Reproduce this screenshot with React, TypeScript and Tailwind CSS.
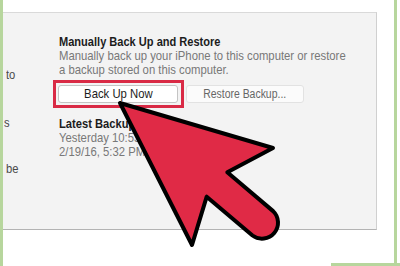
import React from 'react';

// Green frame colour used by the page edges
const GREEN = 'bg-[#b7d69d]';

const Arrow = () => (
  <svg
    className="absolute inset-0 pointer-events-none"
    width={400}
    height={266}
    viewBox="0 0 400 266"
  >
    <path
      d="M120,103 L273,148 L227.3,172.3 L273.1,211.1 A16,16 0 0 1 252.5,235.5 L206.7,196.7 L192,245 Z"
      fill="#e02a46"
      stroke="#000"
      strokeWidth={4}
      strokeLinejoin="round"
    />
  </svg>
);

const App: React.FC = () => {
  return (
    <div className="relative w-[400px] h-[266px] bg-white flex overflow-hidden font-['Liberation_Sans',Arial,sans-serif]">
      {/* left edge */}
      <div className={`w-[3px] shrink-0 ${GREEN}`} />

      {/* middle */}
      <div className="flex-1 min-w-0 flex flex-col">
        <div className="h-[12px]" />
        <div className="w-[374px] h-[218px] bg-[#f3f3f3] border-t border-r border-b border-t-[#d9d9d9] border-r-[#d0d0d0] border-b-[#b3b3b3] flex">
          {/* cut-off left column */}
          <div className="w-[56px] shrink-0 overflow-hidden text-[13px] leading-[15px] text-[#4a4a4a]">
            <div className="mt-[54px] pl-[3px]">
              <span className="inline-block origin-left scale-x-[0.86]">to</span>
            </div>
            <div className="mt-[33px] pl-[1px]">
              <span className="inline-block origin-left scale-x-[0.86]">s</span>
            </div>
            <div className="mt-[31px] pl-[3px]">
              <span className="inline-block origin-left scale-x-[0.86]">be</span>
            </div>
          </div>

          {/* main content */}
          <div className="flex-1 min-w-0 pt-[21px]">
            <div className="text-[13px] leading-[15px] font-bold text-[#1c1c1c] whitespace-nowrap">
              <span className="inline-block origin-left scale-x-[0.85]">Manually Back Up and Restore</span>
            </div>
            <div className="text-[13px] leading-[14px] text-[#787878] whitespace-nowrap">
              <div className="origin-left scale-x-[0.87]">Manually back up your iPhone to this computer or restore</div>
              <div className="origin-left scale-x-[0.87]">a backup stored on this computer.</div>
            </div>

            <div className="mt-[3px] flex items-center">
              <div className="ml-[-6px] shrink-0 w-[131px] h-[28px] border-[3px] border-[#d92a45] p-[2px]">
                <button className="w-[120px] h-[18px] bg-white border border-[#c4c4c4] rounded-[3px] text-[13px] leading-[16px] text-[#1c1c1c] flex items-center justify-center">
                  <span className="inline-block scale-x-[0.87]">Back Up Now</span>
                </button>
              </div>
              <button className="ml-[2px] shrink-0 w-[118px] h-[18px] bg-[#fbfbfb] border border-[#e2e2e2] rounded-[3px] text-[12px] leading-[16px] text-[#666] flex items-center justify-center">
                <span className="inline-block scale-x-[0.87]">Restore Backup...</span>
              </button>
            </div>

            <div className="mt-[8px] text-[13px] leading-[15px] font-bold text-[#1c1c1c] whitespace-nowrap">
              <span className="inline-block origin-left scale-x-[0.86]">Latest Backup:</span>
            </div>
            <div className="text-[13px] leading-[14px] text-[#787878] whitespace-nowrap">
              <div className="origin-left scale-x-[0.87]">Yesterday 10:53 PM</div>
              <div className="origin-left scale-x-[0.87]">2/19/16, 5:32 PM</div>
            </div>
          </div>
        </div>
        <div className="flex-1" />
        <div className="h-[3px] flex justify-end">
          <div className={`w-[63px] ${GREEN}`} />
        </div>
      </div>

      {/* right edge */}
      <div className="w-[6px] shrink-0 flex flex-col">
        <div className={`flex-1 w-[3px] ${GREEN}`} />
        <div className={`h-[3px] ${GREEN}`} />
      </div>

      <Arrow />
    </div>
  );
};

export default App;
